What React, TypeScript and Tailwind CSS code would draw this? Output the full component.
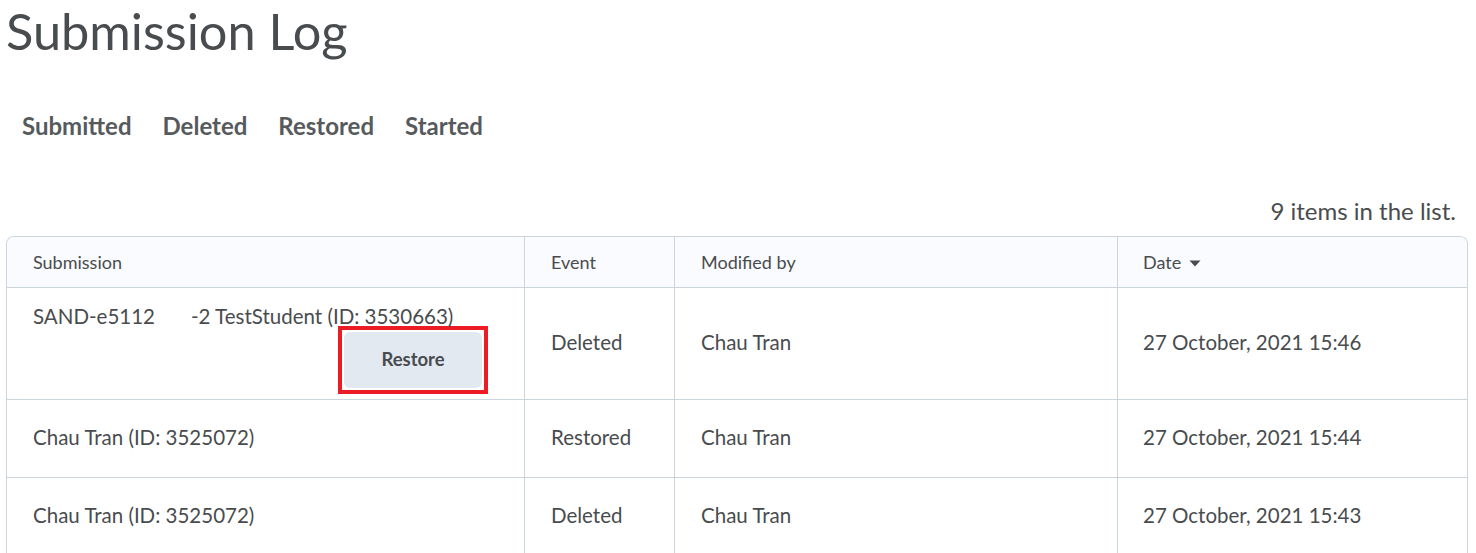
import React from 'react';

type Row = { submission: string; event: string; by: string; date: string; restore?: boolean };

const ROWS: Row[] = [
  { submission: 'SAND-e5112', event: 'Deleted', by: 'Chau Tran', date: '27 October, 2021 15:46', restore: true },
  { submission: 'Chau Tran (ID: 3525072)', event: 'Restored', by: 'Chau Tran', date: '27 October, 2021 15:44' },
  { submission: 'Chau Tran (ID: 3525072)', event: 'Deleted', by: 'Chau Tran', date: '27 October, 2021 15:43' },
];

const TABS = ['Submitted', 'Deleted', 'Restored', 'Started'];

const GRID = 'grid grid-cols-[517px_150px_443px_1fr]';

export default function App() {
  return (
    <div className="min-h-[553px] bg-white pl-[6px] pr-[8px] font-['Lato',sans-serif] text-[#494c4e]">
      <h1 className="pt-[1px] text-[50.5px] leading-[60px] font-normal">Submission Log</h1>

      <nav className="mt-[50px] flex gap-[31px] pl-[16px] text-[24px] leading-[30px] font-bold text-[#565a5c]">
        {TABS.map((t) => (
          <span key={t}>{t}</span>
        ))}
      </nav>

      <p className="mt-[55px] pr-[12px] text-right text-[24px] leading-[30px] text-[#494c4e]">9 items in the list.</p>

      <div className="mt-[10px] overflow-hidden rounded-t-[8px] border border-b-0 border-[#cdd5dc]">
        <div className={`${GRID} h-[50px] bg-[#f9fbff] text-[18px] text-[#494c4e]`}>
          <div className="flex items-center pl-[26px]">Submission</div>
          <div className="flex items-center border-l border-[#cdd5dc] pl-[26px]">Event</div>
          <div className="flex items-center border-l border-[#cdd5dc] pl-[26px]">Modified by</div>
          <div className="flex items-center gap-[8px] border-l border-[#cdd5dc] pl-[25px]">
            Date
            <svg width="12" height="7" viewBox="0 0 12 7" className="mt-[2px]">
              <path d="M0.5 0.5 L11.5 0.5 L6 6.5 Z" fill="#494c4e" />
            </svg>
          </div>
        </div>

        {ROWS.map((r, i) => (
          <div key={i} className={`${GRID} border-t border-[#cdd5dc] text-[20.5px] text-[#494c4e] ${r.restore ? 'h-[112px]' : 'h-[78px]'}`}>
            {r.restore ? (
              <div className="pl-[26px] pt-[14px]">
                <div className="flex leading-[28px] whitespace-nowrap">
                  <span>{r.submission}</span>
                  <span className="ml-[36px]">-2 TestStudent (ID: 3530663)</span>
                </div>
                <div className="-mt-[4px] ml-[305px] h-[68px] w-[150px] border-[4px] border-[#ec1c24] p-[2px]">
                  <button className="h-full w-full rounded-[6px] bg-[#e3e9f1] text-[18.5px] font-bold text-[#494c4e]">Restore</button>
                </div>
              </div>
            ) : (
              <div className="flex items-center pb-[3px] pl-[26px]">{r.submission}</div>
            )}
            <div className="flex items-center border-l border-[#cdd5dc] pb-[3px] pl-[26px]">{r.event}</div>
            <div className="flex items-center border-l border-[#cdd5dc] pb-[3px] pl-[26px]">{r.by}</div>
            <div className="flex items-center border-l border-[#cdd5dc] pb-[3px] pl-[25px]">{r.date}</div>
          </div>
        ))}
      </div>
    </div>
  );
}
